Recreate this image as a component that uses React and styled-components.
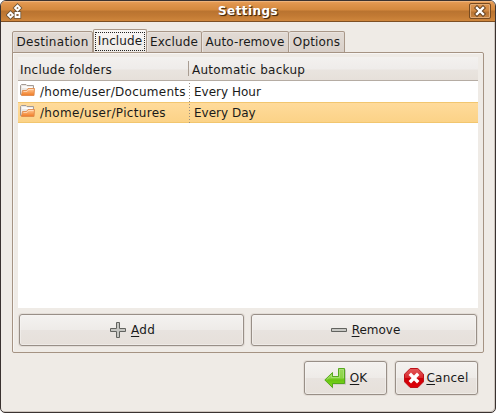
import React from "react";
import styled, { createGlobalStyle, css } from "styled-components";

const GlobalStyle = createGlobalStyle`
  * { box-sizing: border-box; }
  html, body { margin: 0; background: #fff; overflow: hidden; }
  button { font: inherit; color: inherit; margin: 0; padding: 0; }
  svg { display: block; flex: none; }
`;

const Window = styled.div`
  width: 496px;
  height: 413px;
  display: flex;
  flex-direction: column;
  overflow: hidden;
  background: #efebe6;
  border: 1px solid #3a3230;
  border-radius: 6px 6px 5px 5px;
  box-shadow: inset -1px -1px 0 #cdc5be;
  font: 12px/16px "DejaVu Sans", sans-serif;
  color: #1a1a1a;
`;

const TitleBar = styled.header`
  height: 21px;
  flex: none;
  display: grid;
  grid-template-columns: 28px 1fr 28px;
  align-items: center;
  background: linear-gradient(#e9a05a 0, #df944c 3px, #d4883d 9px, #b97330 10px, #c27a34 15px, #cf863c 20px);
  border-bottom: 1px solid #7d4f23;
  box-shadow: inset 0 1px 0 #eeb37b;
`;

const Title = styled.h1`
  margin: 0;
  text-align: center;
  font-size: 12px;
  line-height: 20px;
  font-weight: bold;
  letter-spacing: 0.4px;
  color: #fff;
  text-shadow: 1px 1px 1px #4a2a0c, 1px 1px 0 #5b3818;
`;

const AppIcon = styled.svg`
  margin: 1px 0 0 5px;
`;

const CloseButton = styled.button`
  width: 22px;
  height: 16px;
  display: grid;
  place-items: center;
  justify-self: start;
  margin-left: 2px;
  border: 1px solid #774a20;
  border-radius: 2px;
  background: linear-gradient(#dc9450 0, #d18942 7px, #b87433 8px, #c98542);
  box-shadow: inset 0 0 0 1px #e2ab75;
`;

const Body = styled.main`
  flex: 1;
  display: flex;
  flex-direction: column;
  padding: 7px 11px 0;
`;

const TabStrip = styled.nav`
  display: flex;
  align-items: flex-end;
  height: 24px;
  margin-bottom: -1px;
`;

const Tab = styled.button`
  width: ${(p) => p.$width}px;
  height: 22px;
  flex: none;
  border: 1px solid #a89788;
  border-left-width: ${(p) => (p.$joined ? 0 : 1)}px;
  border-radius: 2px 2px 0 0;
  background: linear-gradient(#e2dbd5, #d9d0c9);
  box-shadow: inset 1px 1px 0 #e9e3de;
  white-space: nowrap;
  letter-spacing: ${(p) => p.$spacing || 0}px;
  ${(p) =>
    p.$active &&
    css`
      height: 24px;
      padding: 1px;
      background: linear-gradient(#f8f6f5, #efebe7);
      border-left-width: 1px;
      border-bottom: 0;
      box-shadow: none;
    `}
`;

const FocusLabel = styled.span`
  display: block;
  height: 19px;
  line-height: 17px;
  margin: 0 0 1px;
  border: 1px dotted #222;
`;

const Panel = styled.section`
  width: 472px;
  height: 301px;
  border: 1px solid #a59383;
  border-radius: 0 2px 2px 2px;
  padding: 4px 5px 0;
  box-shadow: inset 1px 1px 0 #f8f6f4;
`;

const Table = styled.div`
  width: 460px;
  height: 251px;
  background: #fff;
`;

const columns = css`
  display: grid;
  grid-template-columns: 170px 1fr;
`;

const HeaderRow = styled.div`
  ${columns}
  height: 24px;
  align-items: center;
  background: linear-gradient(#f3f1ef 0, #efecea 12px, #e9e4df 13px, #e6e0da);
  border-bottom: 1px solid #b5aca3;
`;

const HeaderCell = styled.span`
  display: block;
  height: 15px;
  line-height: 18px;
  letter-spacing: ${(p) => (p.$divided ? 0.28 : 0.23)}px;
  padding-left: ${(p) => (p.$divided ? 3 : 2)}px;
  border-left: ${(p) => (p.$divided ? "1px solid #a99d92" : "0")};
  white-space: nowrap;
`;

const FolderRow = styled.div`
  ${columns}
  height: 21px;
  background: ${(p) => (p.$selected ? "linear-gradient(#ffdb9c, #fbd286)" : "#fff")};
  box-shadow: ${(p) => (p.$selected ? "inset 0 1px 0 #f2c66f, inset 0 -1px 0 #f2c66f" : "none")};
`;

const PathCell = styled.span`
  display: flex;
  align-items: flex-start;
  gap: 4px;
  padding: 2px 0 0 2px;
  white-space: nowrap;
`;

const Path = styled.span`
  line-height: 19px;
  letter-spacing: ${(p) => p.$spacing}px;
`;

const ScheduleCell = styled.span`
  padding: 2px 0 0 6px;
  line-height: 19px;
  background: repeating-linear-gradient(transparent 0 2px, #998d80 2px 3px) 1px 0 / 1px 100% no-repeat;
`;

const PanelActions = styled.div`
  display: flex;
  gap: 7px;
  padding: 6px 0 0 1px;
`;

const Button = styled.button`
  width: ${(p) => p.$width}px;
  height: ${(p) => p.$height}px;
  display: flex;
  align-items: center;
  justify-content: center;
  gap: ${(p) => p.$gap}px;
  padding-left: ${(p) => p.$shift || 0}px;
  border: 1px solid #988f87;
  border-radius: 3px;
  background: linear-gradient(#f4f2f0 0, #eeebe8 50%, #e8e3df 51%, #e6e0da);
  box-shadow: inset 0 0 0 1px #f8f6f480, 0 0 0 1px #e3ddd7;
`;

const DialogActions = styled.footer`
  display: flex;
  justify-content: flex-end;
  gap: 8px;
  padding: 8px 6px 0 0;
`;

const Label = styled.span`
  display: block;
  line-height: 16px;
  white-space: nowrap;
  letter-spacing: ${(p) => p.$spacing || 0}px;
  &::first-letter {
    text-decoration: underline;
    text-underline-offset: 2px;
  }
`;

function WindowGlyph() {
  return (
    <AppIcon width="18" height="17" viewBox="0 0 18 17">
      <path
        d="M11.500 2.500 14 5 11.500 7.500 9 5ZM4.500 9.500 7 12 4.500 14.500 2 12ZM9.500 10h4v4h-4Z"
        fill="none" stroke="#6b5338" strokeWidth="3.400"
      />
      <path
        d="M11.500 2.500 14 5 11.500 7.500 9 5ZM4.500 9.500 7 12 4.500 14.500 2 12ZM9.500 10h4v4h-4Z"
        fill="#8f6844" stroke="#fff" strokeWidth="1.800"
      />
    </AppIcon>
  );
}

function CloseGlyph() {
  return (
    <svg width="12" height="12" viewBox="0 0 12 12">
      <path d="M3 3 9 9M9 3 3 9" stroke="#65401f" strokeWidth="4.400" strokeLinecap="square" />
      <path d="M3 3 9 9M9 3 3 9" stroke="#fff" strokeWidth="2.400" strokeLinecap="square" />
    </svg>
  );
}

function FolderIcon() {
  return (
    <svg width="16" height="14" viewBox="0 0 16 14">
      <defs>
        <linearGradient id="folderFront" x2="0" y2="1">
          <stop stopColor="#ffd0a0" />
          <stop offset=".5" stopColor="#f9a25c" />
          <stop offset="1" stopColor="#ee7a24" />
        </linearGradient>
      </defs>
      <path d="M.5 11.500V2.500L1.500 1.500H6L7 2.500H13.500V6V11.500Z" fill="#ebe7e3" stroke="#a39a94" />
      <path d="M2 4H6L7.500 4.500H12.500" fill="none" stroke="#fff" strokeWidth="1.500" />
      <path d="M1.500 12.500 2.500 7.500H6.500L8 5.500H14.500L14 12.500Z" fill="url(#folderFront)" stroke="#e08a4b" strokeWidth=".9" />
      <path d="M3.500 8.500H7L8.500 6.500H13.500" fill="none" stroke="#ffe4c8" strokeWidth=".7" />
    </svg>
  );
}

function PlusIcon() {
  return (
    <svg width="16" height="16" viewBox="0 0 16 16">
      <path d="M6.500.5h3v6h6v3h-6v6h-3v-6h-6v-3h6Z" fill="#c5c5c1" stroke="#62635f" />
    </svg>
  );
}

function MinusIcon() {
  return (
    <svg width="16" height="16" viewBox="0 0 16 16">
      <path d="M.5 6.500h15v3H.5Z" fill="#c8c8c4" stroke="#62635f" />
    </svg>
  );
}

function OkIcon() {
  return (
    <svg width="22" height="22" viewBox="0 0 22 22">
      <defs>
        <linearGradient id="okGreen" x2="0" y2="1">
          <stop stopColor="#9ad85d" />
          <stop offset=".5" stopColor="#8bd443" />
          <stop offset=".6" stopColor="#68c312" />
          <stop offset="1" stopColor="#82dd1c" />
        </linearGradient>
      </defs>
      <path d="M2 13.500 9 6.500V11H14V2.500H22V17.500H9V22Z" fill="#6a6a60" opacity=".3" />
      <path d="M.8 13 8.500 5.500V9.500H14.500V1.500H20.500V16.500H8.500V20.500Z" fill="url(#okGreen)" stroke="#4ca412" strokeWidth=".9" />
      <path d="M2.500 12.800 7.500 8V10.500H15.500V2.500H19.500V11" fill="none" stroke="#b5e58c" strokeWidth=".6" />
    </svg>
  );
}

function CancelIcon() {
  return (
    <svg width="20" height="20" viewBox="0 0 20 20">
      <defs>
        <linearGradient id="cancelRed" x2="0" y2="1">
          <stop stopColor="#e35b5b" />
          <stop offset=".48" stopColor="#d8292d" />
          <stop offset=".52" stopColor="#cb0007" />
          <stop offset="1" stopColor="#e00008" />
        </linearGradient>
      </defs>
      <path d="M6.200.5h7.600L19.500 6.200v7.600L13.800 19.500H6.200L.5 13.800V6.200Z" fill="url(#cancelRed)" stroke="#bd1119" />
      <path d="M7 7 13 13M13 7 7 13" stroke="#fff" strokeWidth="3.400" strokeLinecap="square" />
    </svg>
  );
}

const tabs = [
  { name: "Destination", width: 81, spacing: 0.3 },
  { name: "Include", width: 54, active: true, spacing: 0.1 },
  { name: "Exclude", width: 55, joined: true, spacing: 0.15 },
  { name: "Auto-remove", width: 87, joined: true, spacing: 0.08 },
  { name: "Options", width: 56, joined: true, spacing: 0.15 },
];

const folders = [
  { path: "/home/user/Documents", schedule: "Every Hour", spacing: 0.25 },
  { path: "/home/user/Pictures", schedule: "Every Day", spacing: 0.32, selected: true },
];

export default function App() {
  return (
    <>
      <GlobalStyle />
      <Window>
        <TitleBar>
          <WindowGlyph />
          <Title>Settings</Title>
          <CloseButton aria-label="Close"><CloseGlyph /></CloseButton>
        </TitleBar>
        <Body>
          <TabStrip>
            {tabs.map((t) => (
              <Tab key={t.name} $width={t.width} $spacing={t.spacing} $active={t.active} $joined={t.joined}>
                {t.active ? <FocusLabel>{t.name}</FocusLabel> : t.name}
              </Tab>
            ))}
          </TabStrip>
          <Panel>
            <Table>
              <HeaderRow>
                <HeaderCell>Include folders</HeaderCell>
                <HeaderCell $divided>Automatic backup</HeaderCell>
              </HeaderRow>
              {folders.map((f) => (
                <FolderRow key={f.path} $selected={f.selected}>
                  <PathCell><FolderIcon /><Path $spacing={f.spacing}>{f.path}</Path></PathCell>
                  <ScheduleCell>{f.schedule}</ScheduleCell>
                </FolderRow>
              ))}
            </Table>
            <PanelActions>
              <Button $width={225} $height={32} $gap={5} $shift={2}><PlusIcon /><Label $spacing={0.3}>Add</Label></Button>
              <Button $width={226} $height={32} $gap={5} $shift={3}><MinusIcon /><Label>Remove</Label></Button>
            </PanelActions>
          </Panel>
          <DialogActions>
            <Button $width={83} $height={34} $gap={4}><OkIcon /><Label>OK</Label></Button>
            <Button $width={83} $height={34} $gap={2}><CancelIcon /><Label $spacing={0.25}>Cancel</Label></Button>
          </DialogActions>
        </Body>
      </Window>
    </>
  );
}
